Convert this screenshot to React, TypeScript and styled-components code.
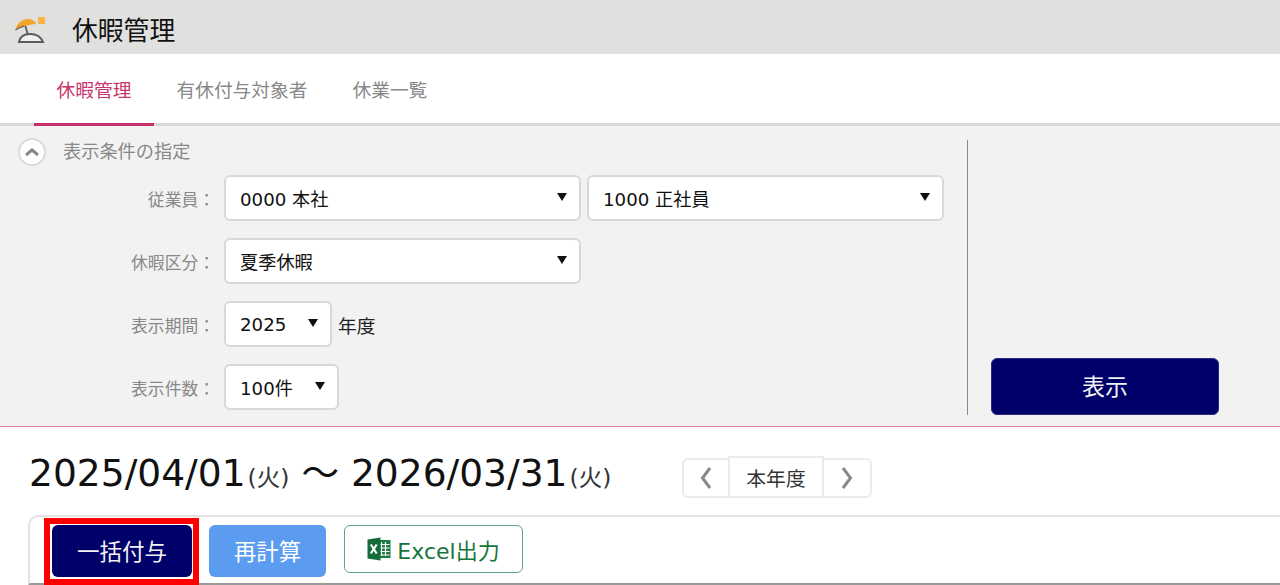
import React from "react";
import styled, { createGlobalStyle } from "styled-components";

const Global = createGlobalStyle`
  html, body { margin: 0; padding: 0; background: #fff; overflow: hidden; }
  body { font-family: "DejaVu Sans", "Noto Sans CJK JP", sans-serif; width: 1280px; height: 585px; }
  * { box-sizing: border-box; }
`;

const Page = styled.div`
  width: 1280px;
  height: 585px;
  overflow: hidden;
  display: flex;
  flex-direction: column;
`;
const Header = styled.header`
  height: 54px;
  background: #e0e0de;
  display: flex;
  align-items: center;
  padding-left: 14px;
  gap: 26px;
`;
const HeaderTitle = styled.h1`
  margin: 2px 0 0;
  font-size: 25.8px;
  font-weight: 400;
  color: #111;
`;
const Tabs = styled.nav`
  height: 72px;
  display: flex;
  padding-left: 34px;
  border-bottom: 3px solid #d9d9d9;
`;
const Tab = styled.div<{ $active?: boolean }>`
  height: 72px;
  padding: 25px 22.6px 0;
  font-size: 18.7px;
  line-height: 24px;
  color: ${(p) => (p.$active ? "#c8336e" : "#888")};
  border-bottom: 3px solid ${(p) => (p.$active ? "#c4306a" : "transparent")};
`;
const Panel = styled.section`
  height: 301px;
  background: #f2f2f2;
  border-bottom: 1px solid #de7ba0;
  display: flex;
  padding: 14px 0 11px 18px;
`;
const Conditions = styled.div`
  width: 950px;
  border-right: 1px solid #8a8a8a;
  display: flex;
  flex-direction: column;
`;
const ConditionHead = styled.div`
  display: flex;
  align-items: center;
  gap: 17px;
  height: 24px;
  margin-bottom: 11px;
  color: #888;
  font-size: 18.2px;
`;
const HeadText = styled.span`
  margin-bottom: 5px;
`;
const Collapse = styled.span`
  width: 28px;
  height: 28px;
  border-radius: 50%;
  background: #fff;
  border: 2px solid #dcdcdc;
  display: flex;
  align-items: center;
  justify-content: center;
`;
const Rows = styled.div`
  display: flex;
  flex-direction: column;
  gap: 17px;
`;
const Row = styled.div`
  display: flex;
  align-items: center;
  gap: 6px;
  height: 46px;
`;
const Label = styled.label`
  width: 200px;
  padding: 2px 3px 0 0;
  text-align: right;
  font-size: 16.8px;
  color: #888;
  white-space: nowrap;
`;
const Select = styled.div<{ $w: number }>`
  width: ${(p) => p.$w}px;
  height: 46px;
  background: #fff;
  border: 2px solid #d8d8d8;
  border-radius: 6px;
  display: flex;
  align-items: center;
  justify-content: space-between;
  padding: 0 12px 0 14px;
  font-size: 18.2px;
  color: #111;
  white-space: nowrap;
`;
const Caret = styled.span`
  width: 0;
  height: 0;
  margin-bottom: 2px;
  border-left: 5.5px solid transparent;
  border-right: 5.5px solid transparent;
  border-top: 8px solid #111;
`;
const Unit = styled.span`
  font-size: 18.7px;
  color: #222;
`;
const Action = styled.div`
  flex: 1;
  display: flex;
  align-items: flex-end;
  padding-left: 23px;
`;
const PrimaryButton = styled.button`
  width: 228px;
  height: 57px;
  padding: 0 0 3px;
  background: #00006a;
  border: 1px solid #2a2a80;
  border-radius: 6px;
  color: #f0f0f0;
  font: inherit;
  font-size: 23px;
`;
const DateRow = styled.div`
  height: 88px;
  display: flex;
  align-items: center;
  padding: 0 0 0 29px;
`;
const DateText = styled.div`
  font-size: 37.6px;
  color: #111;
  white-space: nowrap;
  width: 653px;
  margin-bottom: 4px;
`;
const Weekday = styled.small`
  font-size: 23.5px;
  color: #333;
  margin-left: 2px;
`;
const Pager = styled.div`
  display: flex;
  align-items: center;
  margin-top: 14px;
`;
const PagerArrow = styled.span<{ $side: "l" | "r" }>`
  width: ${(p) => (p.$side === "l" ? 48 : 50)}px;
  height: 40px;
  border: 2px solid #ebebeb;
  border-radius: ${(p) => (p.$side === "l" ? "6px 0 0 6px" : "0 6px 6px 0")};
  display: flex;
  align-items: center;
  justify-content: center;
`;
const PagerMiddle = styled.span`
  width: 96px;
  height: 42px;
  border: 2px solid #ebebeb;
  margin: -2px -2px 0;
  display: flex;
  align-items: center;
  justify-content: center;
  font-size: 19.8px;
  color: #333;
  background: #fff;
  position: relative;
`;
const Toolbar = styled.div`
  margin-left: 28px;
  height: 70px;
  border: 2px solid #e2e2e2;
  border-right: 0;
  border-bottom-color: #999;
  border-radius: 10px 0 0 0;
  display: flex;
  align-items: flex-start;
  padding: 8px 0 0 14px;
`;
const Highlight = styled.div`
  border: 6px solid #ff0000;
  margin-top: -7px;
  width: 155px;
  height: 67px;
  padding: 1px 1px 0 2px;
  background: #fff;
  flex: none;
`;
const BulkButton = styled.button`
  width: 140px;
  height: 52px;
  padding: 0 0 2px;
  background: #00006a;
  border: 0;
  border-radius: 6px;
  color: #f2f2f2;
  font: inherit;
  font-size: 22.5px;
`;
const Recalc = styled.button`
  width: 117px;
  height: 52px;
  margin-left: 10px;
  padding: 0 0 2px;
  background: #5b9bf0;
  border: 0;
  border-radius: 6px;
  color: #fff;
  font: inherit;
  font-size: 22.4px;
`;
const ExcelButton = styled.button`
  width: 179px;
  height: 48px;
  margin-left: 18px;
  padding: 0;
  background: #fff;
  border: 1.5px solid #5fa67f;
  border-radius: 6px;
  color: #14763a;
  font: inherit;
  font-size: 22px;
  display: flex;
  align-items: center;
  justify-content: center;
  gap: 6px;
`;

const Beach = () => (
  <svg width="32" height="32" viewBox="0 0 32 32" fill="none">
    <rect x="24" y="6" width="7" height="7" fill="#fdb24a" />
    <path d="M11 14 L14 24" stroke="#5c5c5c" strokeWidth="1.8" />
    <path d="M1.5 18.5 C3 12 9 8 14 8 C18 8 21 10 22 13 C16 13.5 8 15 1.5 18.5 Z" fill="#f3a525" />
    <path d="M1.5 19 C4 17 7 16 10 15.2" stroke="#666" strokeWidth="1.2" />
    <path d="M5 31 C6 26 10 23 16 23 C22 23 27 26 29 31 Z" fill="#f0f0ee" stroke="#5c5c5c" strokeWidth="2" />
  </svg>
);
const Chevron = ({ dir }: { dir: "up" | "left" | "right" }) => {
  if (dir === "up")
    return (
      <svg width="16" height="10" viewBox="0 0 16 10" fill="none">
        <path d="M2 8 L8 3 L14 8" stroke="#888" strokeWidth="3" />
      </svg>
    );
  return (
    <svg width="14" height="22" viewBox="0 0 14 22" fill="none">
      <path d={dir === "left" ? "M11 1 L3.5 11 L11 21" : "M3 1 L10.5 11 L3 21"} stroke="#8a8a8a" strokeWidth="3" />
    </svg>
  );
};
const ExcelIcon = () => (
  <svg width="24" height="24" viewBox="0 0 24 24">
    <rect x="10" y="3" width="13.5" height="18" fill="#1d7a45" />
    <path d="M14.5 5v14M18.5 5v14M12 7.5h10.5M12 11h10.5M12 14.5h10.5M12 18h10.5" stroke="#fff" strokeWidth="1.2" />
    <path d="M0.5 2.5 L13.5 0.5 V23.5 L0.5 21.5 Z" fill="#146c3a" />
    <path d="M3.8 7.5 L9.7 16.5 M9.7 7.5 L3.8 16.5" stroke="#fff" strokeWidth="2.2" />
  </svg>
);

export default function App() {
  return (
    <Page>
      <Global />
      <Header>
        <Beach />
        <HeaderTitle>休暇管理</HeaderTitle>
      </Header>
      <Tabs>
        <Tab $active>休暇管理</Tab>
        <Tab>有休付与対象者</Tab>
        <Tab>休業一覧</Tab>
      </Tabs>
      <Panel>
        <Conditions>
          <ConditionHead>
            <Collapse><Chevron dir="up" /></Collapse>
            <HeadText>表示条件の指定</HeadText>
          </ConditionHead>
          <Rows>
            <Row>
              <Label>従業員：</Label>
              <Select $w={357}>0000 本社<Caret /></Select>
              <Select $w={357}>1000 正社員<Caret /></Select>
            </Row>
            <Row>
              <Label>休暇区分：</Label>
              <Select $w={357}>夏季休暇<Caret /></Select>
            </Row>
            <Row>
              <Label>表示期間：</Label>
              <Select $w={108}>2025<Caret /></Select>
              <Unit>年度</Unit>
            </Row>
            <Row>
              <Label>表示件数：</Label>
              <Select $w={115}>100件<Caret /></Select>
            </Row>
          </Rows>
        </Conditions>
        <Action>
          <PrimaryButton>表示</PrimaryButton>
        </Action>
      </Panel>
      <DateRow>
        <DateText>
          2025/04/01<Weekday>(火)</Weekday> ～ 2026/03/31<Weekday>(火)</Weekday>
        </DateText>
        <Pager>
          <PagerArrow $side="l"><Chevron dir="left" /></PagerArrow>
          <PagerMiddle>本年度</PagerMiddle>
          <PagerArrow $side="r"><Chevron dir="right" /></PagerArrow>
        </Pager>
      </DateRow>
      <Toolbar>
        <Highlight><BulkButton>一括付与</BulkButton></Highlight>
        <Recalc>再計算</Recalc>
        <ExcelButton><ExcelIcon />Excel出力</ExcelButton>
      </Toolbar>
    </Page>
  );
}
